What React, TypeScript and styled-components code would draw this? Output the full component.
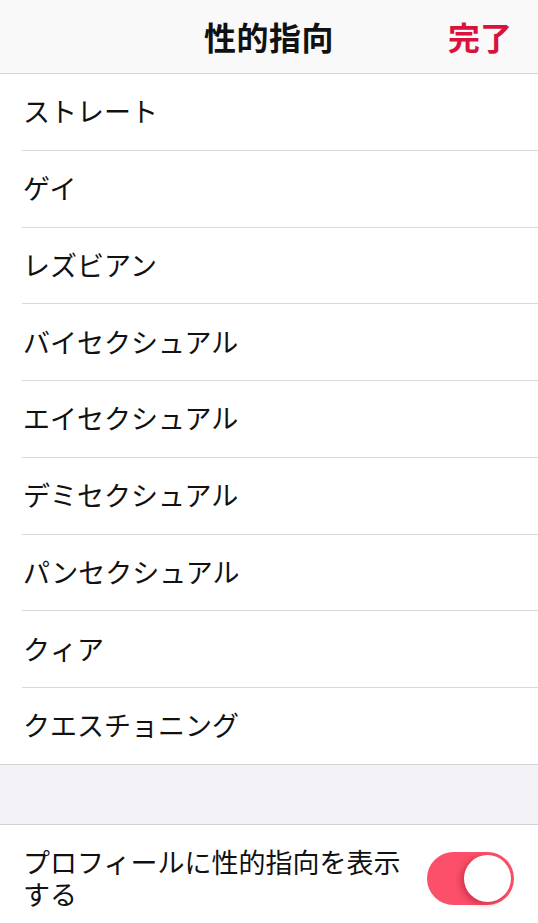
import React, { useState } from "react";
import styled, { createGlobalStyle } from "styled-components";

const Global = createGlobalStyle`
  html, body { margin: 0; padding: 0; background: #ffffff; }
  body { font-family: "Noto Sans CJK JP", "Noto Sans", sans-serif; color: #111111; }
  * { box-sizing: border-box; }
`;

const Page = styled.div`
  width: 538px;
  min-height: 923px;
  display: flex;
  flex-direction: column;
  background: #ffffff;
`;

const Header = styled.header`
  height: 74px;
  background: #f9f9f9;
  border-bottom: 1.5px solid #d6d6d6;
  display: grid;
  grid-template-columns: 1fr auto 1fr;
  align-items: center;
  padding: 0 26px 2px;
`;

const Title = styled.h1`
  grid-column: 2;
  margin: 0;
  font-size: 32px;
  font-weight: 700;
  color: #111111;
  letter-spacing: 0.5px;
`;

const Done = styled.button`
  grid-column: 3;
  justify-self: end;
  border: none;
  background: none;
  padding: 0;
  font-family: inherit;
  font-size: 32px;
  font-weight: 700;
  color: #d8123b;
`;

const List = styled.ul`
  list-style: none;
  margin: 0;
  padding: 0 0 0 22px;
  background: #ffffff;
`;

const Row = styled.li<{ $last?: boolean }>`
  height: 76.75px;
  display: flex;
  align-items: center;
  padding-left: 1px;
  padding-bottom: 2px;
  font-size: 27px;
  border-bottom: 1px solid ${(p) => (p.$last ? "transparent" : "#d9d9d9")};
`;

const Spacer = styled.div`
  height: 61px;
  background: #f2f2f7;
  border-top: 1px solid #d2d2d6;
  border-bottom: 1px solid #d2d2d6;
  margin-top: -1px;
`;

const ToggleRow = styled.div`
  display: flex;
  align-items: flex-start;
  padding: 21px 24px 0 23px;
  gap: 20px;
`;

const ToggleLabel = styled.div`
  flex: 1;
  font-size: 27px;
  line-height: 32px;
`;

const Track = styled.button<{ $on: boolean }>`
  position: relative;
  flex: none;
  width: 87px;
  height: 53px;
  margin-top: 6px;
  border: none;
  border-radius: 27px;
  padding: 0;
  background: ${(p) => (p.$on ? "#fc4f69" : "#e5e5ea")};
`;

const Knob = styled.span<{ $on: boolean }>`
  position: absolute;
  top: 3px;
  left: ${(p) => (p.$on ? "37px" : "3px")};
  width: 47px;
  height: 47px;
  border-radius: 50%;
  background: #ffffff;
  box-shadow: -3px 2px 6px rgba(120, 0, 20, 0.35);
`;

const items = [
  "ストレート",
  "ゲイ",
  "レズビアン",
  "バイセクシュアル",
  "エイセクシュアル",
  "デミセクシュアル",
  "パンセクシュアル",
  "クィア",
  "クエスチョニング",
];

export default function App() {
  const [on, setOn] = useState(true);
  return (
    <Page>
      <Global />
      <Header>
        <Title>性的指向</Title>
        <Done>完了</Done>
      </Header>
      <List>
        {items.map((t, i) => (
          <Row key={t} $last={i === items.length - 1}>
            {t}
          </Row>
        ))}
      </List>
      <Spacer />
      <ToggleRow>
        <ToggleLabel>プロフィールに性的指向を表示する</ToggleLabel>
        <Track $on={on} onClick={() => setOn(!on)}>
          <Knob $on={on} />
        </Track>
      </ToggleRow>
    </Page>
  );
}
